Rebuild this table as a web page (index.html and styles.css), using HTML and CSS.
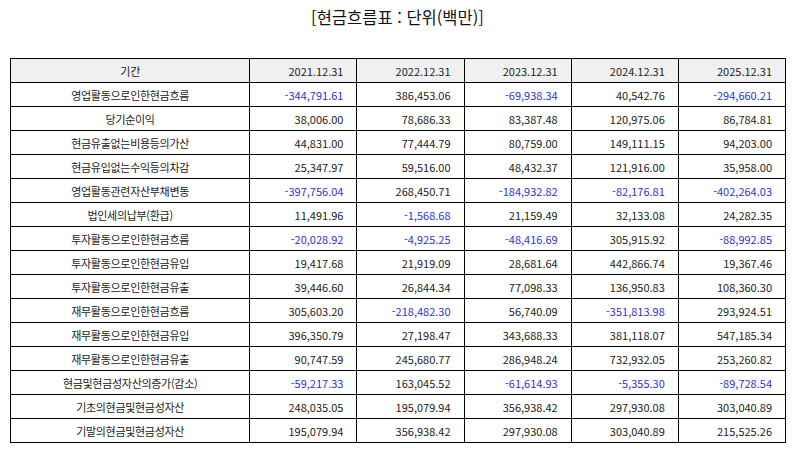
FILE: index.html
```html
<!DOCTYPE html>
<html lang="ko">
<head>
<meta charset="utf-8">
<title>현금흐름표</title>
<link rel="stylesheet" href="styles.css">
</head>
<body>
<div class="title">[현금흐름표 : 단위(백만)]</div>
<table class="cf">
<colgroup>
<col class="c-label"><col class="c-num"><col class="c-num"><col class="c-num"><col class="c-num"><col class="c-num">
</colgroup>
<thead>
<tr><th class="label">기간</th><th>2021.12.31</th><th>2022.12.31</th><th>2023.12.31</th><th>2024.12.31</th><th>2025.12.31</th></tr>
</thead>
<tbody>
<tr><td class="label">영업활동으로인한현금흐름</td><td class="neg">-344,791.61</td><td>386,453.06</td><td class="neg">-69,938.34</td><td>40,542.76</td><td class="neg">-294,660.21</td></tr>
<tr><td class="label">당기순이익</td><td>38,006.00</td><td>78,686.33</td><td>83,387.48</td><td>120,975.06</td><td>86,784.81</td></tr>
<tr><td class="label">현금유출없는비용등의가산</td><td>44,831.00</td><td>77,444.79</td><td>80,759.00</td><td>149,111.15</td><td>94,203.00</td></tr>
<tr><td class="label">현금유입없는수익등의차감</td><td>25,347.97</td><td>59,516.00</td><td>48,432.37</td><td>121,916.00</td><td>35,958.00</td></tr>
<tr><td class="label">영업활동관련자산부채변동</td><td class="neg">-397,756.04</td><td>268,450.71</td><td class="neg">-184,932.82</td><td class="neg">-82,176.81</td><td class="neg">-402,264.03</td></tr>
<tr><td class="label">법인세의납부(환급)</td><td>11,491.96</td><td class="neg">-1,568.68</td><td>21,159.49</td><td>32,133.08</td><td>24,282.35</td></tr>
<tr><td class="label">투자활동으로인한현금흐름</td><td class="neg">-20,028.92</td><td class="neg">-4,925.25</td><td class="neg">-48,416.69</td><td>305,915.92</td><td class="neg">-88,992.85</td></tr>
<tr><td class="label">투자활동으로인한현금유입</td><td>19,417.68</td><td>21,919.09</td><td>28,681.64</td><td>442,866.74</td><td>19,367.46</td></tr>
<tr><td class="label">투자활동으로인한현금유출</td><td>39,446.60</td><td>26,844.34</td><td>77,098.33</td><td>136,950.83</td><td>108,360.30</td></tr>
<tr><td class="label">재무활동으로인한현금흐름</td><td>305,603.20</td><td class="neg">-218,482.30</td><td>56,740.09</td><td class="neg">-351,813.98</td><td>293,924.51</td></tr>
<tr><td class="label">재무활동으로인한현금유입</td><td>396,350.79</td><td>27,198.47</td><td>343,688.33</td><td>381,118.07</td><td>547,185.34</td></tr>
<tr><td class="label">재무활동으로인한현금유출</td><td>90,747.59</td><td>245,680.77</td><td>286,948.24</td><td>732,932.05</td><td>253,260.82</td></tr>
<tr><td class="label">현금및현금성자산의증가(감소)</td><td class="neg">-59,217.33</td><td>163,045.52</td><td class="neg">-61,614.93</td><td class="neg">-5,355.30</td><td class="neg">-89,728.54</td></tr>
<tr><td class="label">기초의현금및현금성자산</td><td>248,035.05</td><td>195,079.94</td><td>356,938.42</td><td>297,930.08</td><td>303,040.89</td></tr>
<tr><td class="label">기말의현금및현금성자산</td><td>195,079.94</td><td>356,938.42</td><td>297,930.08</td><td>303,040.89</td><td>215,525.26</td></tr>
</tbody>
</table>
</body>
</html>
```
FILE: styles.css
```css
html, body {
  margin: 0;
  padding: 0;
  background: #ffffff;
}
body {
  font-family: "Noto Sans CJK KR", "Noto Sans", sans-serif;
  color: #222222;
}
.title {
  text-align: center;
  font-size: 16.5px;
  line-height: 22px;
  padding-top: 6px;
  height: 30px;
  margin-bottom: 22px;
  color: #111111;
}
.cf {
  border-collapse: collapse;
  margin-left: 10px;
  width: 776px;
  table-layout: fixed;
  font-size: 11px;
}
.c-label { width: 239px; }
.c-num { width: 107px; }
.cf th, .cf td {
  border: 1px solid #000000;
  height: 23px;
  padding: 0 13px 0 4px;
  text-align: right;
  font-weight: normal;
  white-space: nowrap;
  line-height: 14px;
}
.cf thead th {
  background: #f0f0f0;
}
.cf .label {
  text-align: center;
  padding: 0 4px;
  letter-spacing: -0.3px;
}
.cf .neg {
  color: #3030d8;
}
```
